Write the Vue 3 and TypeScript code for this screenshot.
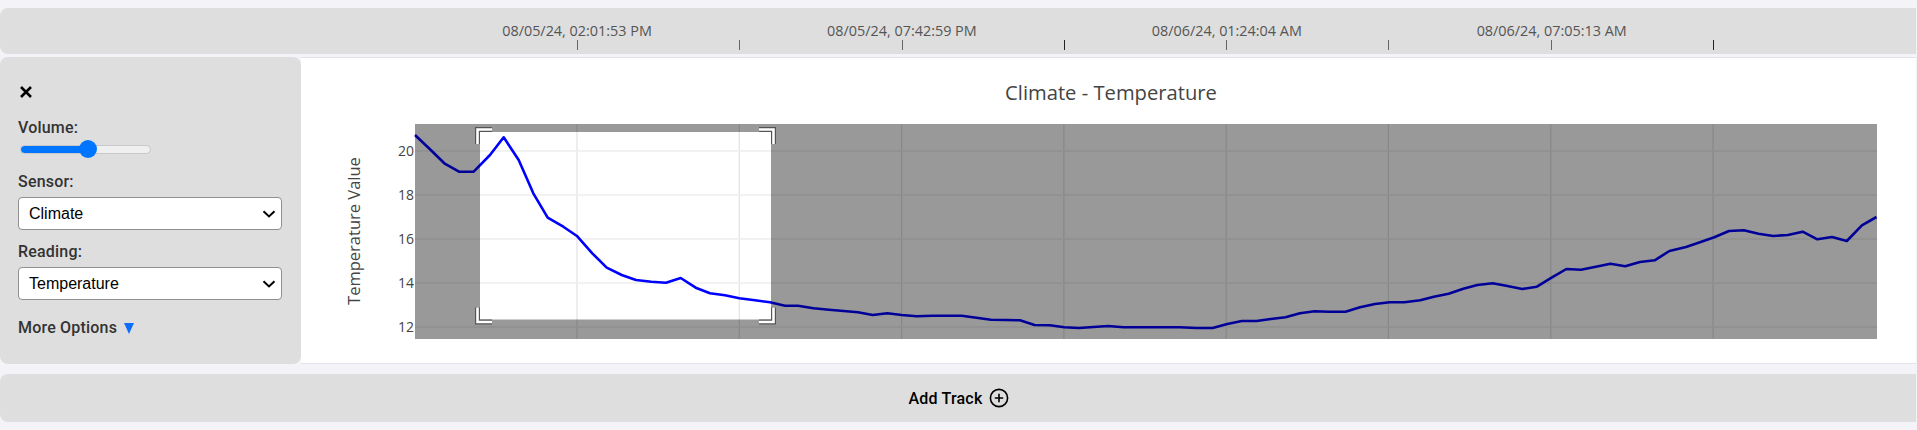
<script setup lang="ts">
import { computed, ref } from "vue";

const volume = ref(52);
const sensor = ref("Climate");
const reading = ref("Temperature");

const volumeFill = computed(() => {
  return `linear-gradient(to right, #0075ff ${volume.value}%, #efefef ${volume.value}%)`;
});

const topTicks = [577, 739.3, 901.6, 1063.9, 1226.2, 1388.4, 1550.8, 1713.1];
const timeLabels = [
  "08/05/24, 02:01:53 PM",
  "08/05/24, 07:42:59 PM",
  "08/06/24, 01:24:04 AM",
  "08/06/24, 07:05:13 AM",
];

const labelStep = 162.45 * 2;

const yTicks = [
  { label: "20", y: 151 },
  { label: "18", y: 195 },
  { label: "16", y: 239 },
  { label: "14", y: 283 },
  { label: "12", y: 327 },
];

const tempPoints =
  "415,135 430,149.3 444.3,163.3 459,171.7 473.7,171.7 490,155 503.7,137.3 518.7,160 533.3,193.3 547.7,217.7 563.3,226.7 577.3,236.3 592.3,253.3 606.7,267.7 621.7,275 636,280 651.3,281.7 666,282.7 680.7,278 695.7,287.7 710,293.3 725,295.3 739.3,298.3 755,300.3 770,302.3 785,305.7 798,305.7 813.5,308.3 829,309.7 843.6,311 858,312.3 872.7,315 887.3,313.3 901.8,315 916.4,316.3 932.7,315.7 961.8,315.7 976.4,317.7 991,319.7 1005.5,320 1020,320.3 1034.5,325 1049.8,325.3 1064.4,327.3 1079,328 1093.5,327 1108,326 1123.6,327.3 1143.6,327.3 1180,327.3 1196.4,328 1212.7,328 1227.3,324 1241.8,321 1256.4,321 1270.9,319 1285.5,317.3 1300,313.3 1314.5,311.3 1329,311.7 1345.5,311.7 1360,307.3 1375,304 1389.7,302.3 1404.4,302.3 1420.2,300.3 1433.9,296.7 1448.6,293.7 1463.3,288.7 1477.3,285 1492.7,283.3 1507.5,286 1522.2,289 1536.9,286.7 1551.6,277.7 1566.4,269 1581,269.7 1595.8,266.7 1610.5,263.7 1625.2,266.3 1640,262 1654.7,260.3 1669.4,251 1686,247 1700.7,242 1714.3,237.3 1729,231 1743.8,230.3 1758.5,233.7 1773.2,236 1787.9,235 1802.6,231.7 1817.4,239.3 1832,237 1846.8,241 1861.9,225.3 1876.5,217";

const corners = [
  "477.5,144 477.5,129.5 492,129.5",
  "759,129.5 773.5,129.5 773.5,144",
  "477.5,307.5 477.5,322 492,322",
  "759,322 773.5,322 773.5,307.5",
];
</script>

<template>
  <div class="page">
    <div class="time-bar">
      <div class="time-labels">
        <span
          v-for="(label, i) in timeLabels"
          :key="label"
          class="time-label"
          :style="{ left: 577 + i * labelStep + 'px' }"
          >{{ label }}</span
        >
      </div>
      <i
        v-for="(x, i) in topTicks"
        :key="x"
        class="time-tick"
        :class="{ 'time-tick--dark': i % 4 === 3 }"
        :style="{ left: x + 'px' }"
      ></i>
    </div>

    <div class="track">
      <aside class="controls">
        <button class="close-btn" aria-label="Close">
          <svg width="12" height="12" viewBox="0 0 12 12">
            <path d="M1 1 11 11M11 1 1 11" stroke="#000" stroke-width="2.6" />
          </svg>
        </button>
        <label class="field-label volume-label" for="volume">Volume:</label>
        <input
          id="volume"
          v-model="volume"
          class="volume"
          type="range"
          :style="{ '--fill': volumeFill }"
        />
        <label class="field-label sensor-label" for="sensor">Sensor:</label>
        <div class="picker-wrap">
          <select id="sensor" v-model="sensor" class="picker">
            <option>Climate</option>
          </select>
          <svg class="chevron" width="14" height="8" viewBox="0 0 14 8">
            <path d="M1.5 1.2 7 6.4 12.5 1.2" fill="none" stroke="#000" stroke-width="2" />
          </svg>
        </div>
        <label class="field-label reading-label" for="reading">Reading:</label>
        <div class="picker-wrap">
          <select id="reading" v-model="reading" class="picker">
            <option>Temperature</option>
          </select>
          <svg class="chevron" width="14" height="8" viewBox="0 0 14 8">
            <path d="M1.5 1.2 7 6.4 12.5 1.2" fill="none" stroke="#000" stroke-width="2" />
          </svg>
        </div>
        <div class="more-options">
          More Options <span class="more-arrow"></span>
        </div>
      </aside>

      <div class="chart">
        <svg class="plot" viewBox="301 58 1615 305" width="1615" height="305">
          <text x="1111" y="100" class="plot-title" text-anchor="middle">
            Climate - Temperature
          </text>
          <text
            class="axis-title"
            text-anchor="middle"
            transform="translate(360 231) rotate(-90)"
          >
            Temperature Value
          </text>

          <text
            v-for="t in yTicks"
            :key="t.label"
            x="414"
            :y="t.y + 5"
            class="y-tick"
            text-anchor="end"
          >
            {{ t.label }}
          </text>

          <line
            v-for="x in topTicks"
            :key="x"
            :x1="x"
            :x2="x"
            y1="124"
            y2="339"
            stroke="#e2e2e2"
            stroke-width="1.2"
          />
          <line
            v-for="t in yTicks"
            :key="t.label"
            x1="415"
            x2="1877"
            :y1="t.y"
            :y2="t.y"
            stroke="#eeeeee"
            stroke-width="1.6"
          />
          <polyline
            :points="tempPoints"
            fill="none"
            stroke="#0000ff"
            stroke-width="2.6"
            stroke-linejoin="round"
          />

          <!-- dimmed area round the zoom window -->
          <path
            d="M415 124H1877V339H415ZM480 132V319.5H771V132Z"
            fill="#000"
            fill-opacity="0.4"
            fill-rule="evenodd"
          />
          <g fill="none">
            <polyline
              v-for="c in corners"
              :key="c"
              :points="c"
              stroke="#555"
              stroke-width="5"
            />
            <polyline
              v-for="c in corners"
              :key="c + 'w'"
              :points="c"
              stroke="#fff"
              stroke-width="2.6"
            />
          </g>
        </svg>
      </div>
    </div>

    <div class="add-track">
      <span>Add Track</span>
      <svg width="20" height="20" viewBox="0 0 20 20">
        <circle cx="10" cy="10" r="8.6" fill="none" stroke="#000" stroke-width="1.6" />
        <path d="M10 5.8V14.2M5.8 10H14.2" stroke="#000" stroke-width="1.6" />
      </svg>
    </div>
  </div>
</template>

<style>
html,
body {
  margin: 0;
  background: #f3f3f8;
}
</style>

<style scoped>
.page {
  width: 1916px;
  height: 430px;
  overflow: hidden;
  display: flex;
  flex-direction: column;
  font-family: Roboto, "Liberation Sans", sans-serif;
  letter-spacing: 0.2px;
}

.time-bar {
  position: relative;
  height: 46px;
  margin-top: 8px;
  background: #dedede;
  border-radius: 8px 0 0 8px;
  flex: none;
}
.time-labels {
  position: absolute;
  inset: 0;
}
.time-label {
  position: absolute;
  top: 14px;
  transform: translateX(-50%);
  font-family: "Open Sans", sans-serif;
  font-size: 14.4px;
  letter-spacing: 0;
  line-height: 18px;
  color: #555;
  white-space: nowrap;
}
.time-tick {
  position: absolute;
  top: 32px;
  width: 1px;
  height: 10px;
  background: #666;
}
.time-tick--dark {
  background: #222;
}

.track {
  display: flex;
  height: 307px;
  margin-top: 3px;
  flex: none;
}
.controls {
  width: 301px;
  flex: none;
  box-sizing: border-box;
  padding: 29px 18px 0;
  display: flex;
  flex-direction: column;
  align-items: flex-start;
  background: #dedede;
  border-radius: 8px;
}
.close-btn {
  display: flex;
  padding: 0;
  margin: 0 0 0 2px;
  border: none;
  background: none;
}
.field-label {
  font-size: 16px;
  font-weight: 500;
  line-height: 18px;
  color: #333;
}
.volume-label {
  margin-top: 21px;
}
.volume {
  appearance: none;
  width: 131px;
  height: 18px;
  margin: 3px 0 0 2px;
  background: none;
}
.volume::-webkit-slider-runnable-track {
  height: 9px;
  box-sizing: border-box;
  border: 1px solid #c8c8c8;
  border-radius: 5px;
  background: var(--fill);
}
.volume::-webkit-slider-thumb {
  appearance: none;
  width: 18px;
  height: 18px;
  margin-top: -5.5px;
  border-radius: 50%;
  background: #0075ff;
}
.sensor-label {
  margin-top: 15px;
}
.reading-label {
  margin-top: 13px;
}
.picker-wrap {
  position: relative;
  margin-top: 6px;
}
.picker {
  display: block;
  appearance: none;
  width: 264px;
  height: 33px;
  padding: 0 10px;
  box-sizing: border-box;
  font-family: "Liberation Sans", sans-serif;
  font-size: 16px;
  color: #000;
  background: #fff;
  border: 1px solid #8f8f8f;
  border-radius: 4px;
}
.chevron {
  position: absolute;
  top: 13px;
  right: 6px;
  pointer-events: none;
}
.more-options {
  margin-top: 19px;
  font-size: 16px;
  font-weight: 500;
  line-height: 18px;
  color: #333;
  display: flex;
  align-items: center;
  gap: 7px;
}
.more-arrow {
  width: 0;
  height: 0;
  border-left: 5.5px solid transparent;
  border-right: 5.5px solid transparent;
  border-top: 11px solid #0d6efd;
}

.chart {
  flex: 1;
  background: #fff;
  border-top: 1px solid #e2e2ea;
  border-bottom: 1px solid #e2e2ea;
  box-sizing: border-box;
  height: 307px;
}
.plot {
  display: block;
  font-family: "Open Sans", sans-serif;
  letter-spacing: 0;
}
.plot-title {
  font-size: 20.2px;
  fill: #444;
}
.axis-title {
  font-size: 16.5px;
  fill: #444;
}
.y-tick {
  font-size: 14px;
  fill: #444;
}

.add-track {
  height: 48px;
  margin-top: 10px;
  padding-left: 2px;
  flex: none;
  display: flex;
  align-items: center;
  justify-content: center;
  gap: 7px;
  background: #dedede;
  border-radius: 8px 0 0 8px;
  font-size: 16px;
  font-weight: 500;
  color: #000;
}
</style>
